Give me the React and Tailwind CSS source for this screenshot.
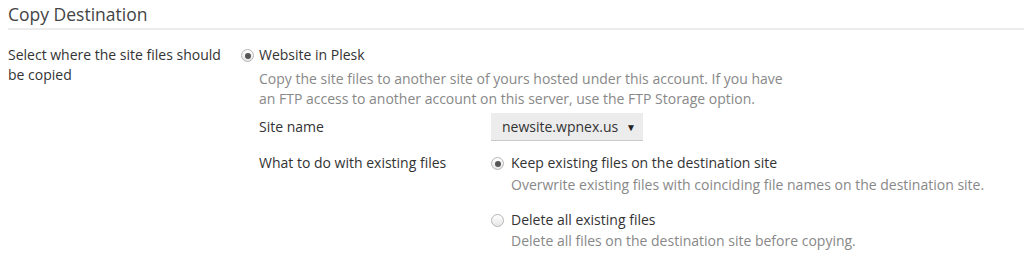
import React from "react";

function Radio({ checked }) {
  return (
    <span className="mt-[4px] flex h-[13px] w-[13px] shrink-0 items-center justify-center rounded-full border border-[#b5b5b5] bg-gradient-to-b from-[#ffffff] to-[#e6e6e6]">
      {checked && <span className="h-[6px] w-[6px] rounded-full bg-[#555]" />}
    </span>
  );
}

export default function App() {
  return (
    <div className="h-[266px] w-[1024px] bg-white text-[14px] leading-[20px] text-[#333]" style={{ fontFamily: '"Open Sans", sans-serif' }}>
      <div className="pl-[8px] pt-[3px]">
        <h2 className="border-b-2 border-[#ececec] pb-[2px] text-[17.5px] leading-[23px] text-[#444]">Copy Destination</h2>
      </div>
      <div className="flex pl-[8px] pt-[15px]">
        <div className="w-[233px] shrink-0 pr-[8px]">Select where the site files should be copied</div>
        <div className="flex-1">
          <label className="flex gap-[5px]">
            <Radio checked />
            <span>Website in Plesk</span>
          </label>
          <div className="pl-[18px]">
            <p className="mt-[4px] w-[540px] text-[#888]">Copy the site files to another site of yours hosted under this account. If you have an FTP access to another account on this server, use the FTP Storage option.</p>
            <div className="mt-[4px] flex items-center">
              <div className="w-[232px] shrink-0">Site name</div>
              <div className="flex h-[28px] w-[152px] items-center justify-between border-b border-[#c8c8c8] bg-[#ececec] pl-[11px] pr-[7px]">
                <span>newsite.wpnex.us</span>
                <span className="text-[10px] leading-none text-[#222]">▼</span>
              </div>
            </div>
            <div className="mt-[12px] flex">
              <div className="w-[232px] shrink-0">What to do with existing files</div>
              <div>
                <label className="flex gap-[7px]">
                  <Radio checked />
                  <span>Keep existing files on the destination site</span>
                </label>
                <p className="mt-[2px] pl-[20px] text-[#888]">Overwrite existing files with coinciding file names on the destination site.</p>
                <label className="mt-[15px] flex gap-[7px]">
                  <Radio />
                  <span>Delete all existing files</span>
                </label>
                <p className="mt-[1px] pl-[20px] text-[#888]">Delete all files on the destination site before copying.</p>
              </div>
            </div>
          </div>
        </div>
      </div>
    </div>
  );
}
